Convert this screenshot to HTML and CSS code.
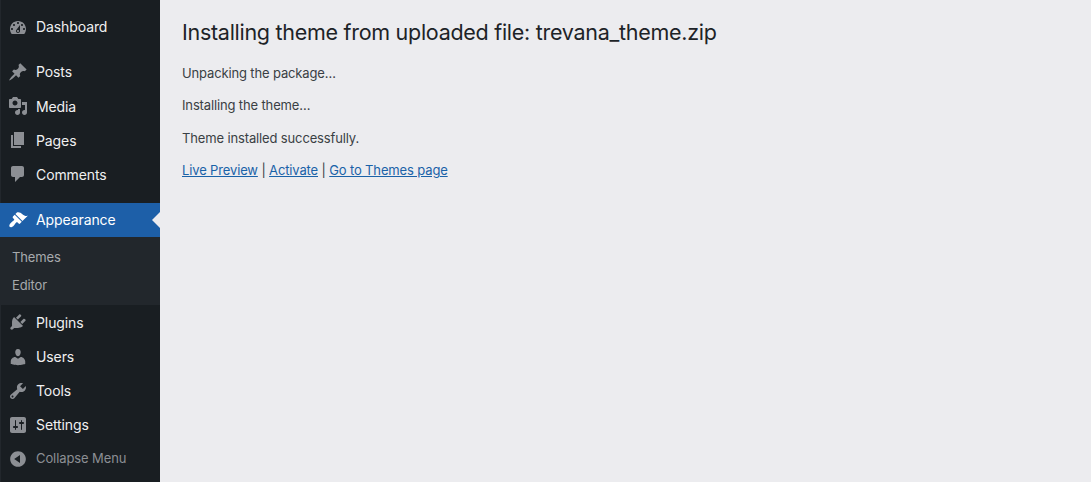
FILE: index.html
```html
<!DOCTYPE html>
<html lang="en">
  <head>
    <meta name="viewport" content="width=device-width, initial-scale=1.0" />
    <title>Install Themes</title>
    <link rel="stylesheet" href="styles.css">
  </head>
  <body>
    <nav class="adminmenu">
      <a class="menu-item" href="#">
        <svg class="menu-icon" viewBox="0 -1 20 20"><path d="M3.76 16h12.48c1.1-1.37 1.76-3.11 1.76-5 0-4.42-3.58-8-8-8s-8 3.58-8 8c0 1.89.66 3.63 1.76 5zM10 4c.55 0 1 .45 1 1s-.45 1-1 1-1-.45-1-1 .45-1 1-1zM6 6c.55 0 1 .45 1 1s-.45 1-1 1-1-.45-1-1 .45-1 1-1zm8 0c.55 0 1 .45 1 1s-.45 1-1 1-1-.45-1-1 .45-1 1-1zm-5.37 5.55L12 7v6c0 1.1-.9 2-2 2s-2-.9-2-2c0-.57.24-1.08.63-1.45zM4 10c.55 0 1 .45 1 1s-.45 1-1 1-1-.45-1-1 .45-1 1-1zm12 0c.55 0 1 .45 1 1s-.45 1-1 1-1-.45-1-1 .45-1 1-1zm-5 3c0-.55-.45-1-1-1s-1 .45-1 1 .45 1 1 1 1-.45 1-1z"/></svg>
        Dashboard
      </a>
      <div class="menu-separator"></div>
      <a class="menu-item" href="#">
        <svg class="menu-icon" viewBox="0 0 20 20"><path d="M10.44 3.02l1.82-1.82 6.36 6.35-1.83 1.82c-1.05-.68-2.48-.57-3.41.36l-.75.75c-.92.93-1.04 2.35-.35 3.41l-1.83 1.82-2.41-2.41-2.8 2.79c-.42.42-3.38 2.71-3.8 2.29s1.86-3.39 2.28-3.81l2.79-2.79L4.1 9.36l1.83-1.82c1.05.69 2.48.57 3.4-.36l.75-.75c.93-.92 1.05-2.35.36-3.41z"/></svg>
        Posts
      </a>
      <a class="menu-item" href="#">
        <svg class="menu-icon" viewBox="0 0 20 20"><path d="M13 11V4c0-.55-.45-1-1-1h-1.67L9 1H5L3.67 3H2c-.55 0-1 .45-1 1v7c0 .55.45 1 1 1h10c.55 0 1-.45 1-1zM7 4.5c1.38 0 2.5 1.12 2.5 2.5S8.38 9.5 7 9.5 4.5 8.38 4.5 7 5.62 4.5 7 4.5zM14 6h5v10.5c0 1.38-1.12 2.5-2.5 2.5S14 17.88 14 16.5s1.12-2.5 2.5-2.5c.17 0 .34.02.5.05V9h-3V6zm-4 8.05V13h2v3.5c0 1.38-1.12 2.5-2.5 2.5S7 17.88 7 16.5 8.12 14 9.5 14c.17 0 .34.02.5.05z"/></svg>
        Media
      </a>
      <a class="menu-item" href="#">
        <svg class="menu-icon" viewBox="0 0 20 20"><path d="M6 15V2h10v13H6zm-1 1h8v2H3V5h2v11z"/></svg>
        Pages
      </a>
      <a class="menu-item" href="#">
        <svg class="menu-icon" viewBox="0 0 20 20"><path d="M5 2h9c1.1 0 2 .9 2 2v7c0 1.1-.9 2-2 2h-2l-5 5v-5H5c-1.1 0-2-.9-2-2V4c0-1.1.9-2 2-2z"/></svg>
        Comments
      </a>
      <div class="menu-separator"></div>
      <a class="menu-item is-current" href="#">
        <svg class="menu-icon" viewBox="0 0 20 20"><path d="M14.48 11.06L7.41 3.99l1.5-1.5c.5-.56 2.3-.47 3.51.32 1.21.8 1.43 1.28 2.91 2.1 1.18.64 2.45 1.26 4.45.85zM13.77 11.77L6.7 4.7 4.93 6.47c-.39.39-.39 1.02 0 1.41l1.06 1.06c.39.39.39 1.03 0 1.42-.6.6-1.43 1.11-2.21 1.69-.35.26-.7.53-1.01.84-1.46 1.46-1.9 3.1-1.06 3.94s2.48.4 3.94-1.06c.31-.31.58-.66.84-1.01.58-.78 1.09-1.61 1.69-2.21.39-.39 1.03-.39 1.42 0l1.06 1.06c.39.39 1.02.39 1.41 0z"/></svg>
        Appearance
      </a>
      <div class="submenu">
        <a class="submenu-item" href="#">Themes</a>
        <a class="submenu-item" href="#">Editor</a>
      </div>
      <a class="menu-item" href="#">
        <svg class="menu-icon" viewBox="0 0 20 20"><path d="M13.11 4.36L9.87 7.6 8 5.73l3.24-3.24c.35-.34 1.05-.2 1.56.32.52.51.66 1.21.31 1.55zm-8 1.77l.91-1.12 9.01 9.01-1.19.84c-.71.71-2.63 1.16-3.82 1.16H6.14L4.9 17.26c-.59.59-1.54.59-2.12 0-.59-.58-.59-1.53 0-2.12l1.24-1.24v-3.88c0-1.13.4-3.19 1.09-3.89zm7.26 3.97l3.24-3.24c.34-.35 1.04-.21 1.55.31.52.51.66 1.21.31 1.55l-3.24 3.25z"/></svg>
        Plugins
      </a>
      <a class="menu-item" href="#">
        <svg class="menu-icon" viewBox="0 0 20 20"><path d="M10 9.25c-2.27 0-2.73-3.44-2.73-3.44C7 4.02 7.82 2 9.97 2c2.16 0 2.98 2.02 2.71 3.81 0 0-.41 3.44-2.68 3.44zm0 2.57L12.72 10c2.39 0 4.52 2.33 4.52 4.53v2.49s-3.65 1.13-7.24 1.13c-3.65 0-7.24-1.13-7.24-1.13v-2.49c0-2.25 1.94-4.48 4.47-4.48z"/></svg>
        Users
      </a>
      <a class="menu-item" href="#">
        <svg class="menu-icon" viewBox="0 0 20 20"><path d="M16.68 9.77c-1.34 1.34-3.3 1.67-4.95.99l-5.41 6.52c-.99.99-2.59.99-3.58 0s-.99-2.59 0-3.57l6.52-5.42c-.68-1.65-.35-3.61.99-4.95 1.28-1.28 3.12-1.62 4.72-1.06l-2.89 2.89 2.82 2.82 2.86-2.87c.53 1.58.18 3.39-1.08 4.65zM3.81 16.21c.4.39 1.04.39 1.43 0 .4-.4.4-1.04 0-1.43-.39-.4-1.03-.4-1.43 0-.39.39-.39 1.03 0 1.43z"/></svg>
        Tools
      </a>
      <a class="menu-item" href="#">
        <svg class="menu-icon" viewBox="0 0 20 20"><path d="M18 16V4c0-1.1-.9-2-2-2H4c-1.1 0-2 .9-2 2v12c0 1.1.9 2 2 2h12c1.1 0 2-.9 2-2zM8 11h1c.55 0 1 .45 1 1s-.45 1-1 1H8v1.5c0 .28-.22.5-.5.5s-.5-.22-.5-.5V13H6c-.55 0-1-.45-1-1s.45-1 1-1h1V5.5c0-.28.22-.5.5-.5s.5.22.5.5V11zm5-2h-1c-.55 0-1-.45-1-1s.45-1 1-1h1V5.5c0-.28.22-.5.5-.5s.5.22.5.5V7h1c.55 0 1 .45 1 1s-.45 1-1 1h-1v5.5c0 .28-.22.5-.5.5s-.5-.22-.5-.5V9z"/></svg>
        Settings
      </a>
      <a class="menu-item menu-collapse" href="#">
        <svg class="menu-icon" viewBox="0 0 20 20"><path d="M10 2.16c4.33 0 7.84 3.51 7.84 7.84s-3.51 7.84-7.84 7.84S2.16 14.33 2.16 10 5.71 2.16 10 2.16zm2 11.72V6.12L6.18 9.97z"/></svg>
        Collapse Menu
      </a>
    </nav>

    <main class="content">
      <h1>Installing theme from uploaded file: trevana_theme.zip</h1>
      <p>Unpacking the package…</p>
      <p>Installing the theme…</p>
      <p>Theme installed successfully.</p>
      <p><a href="#">Live Preview</a> | <a href="#">Activate</a> | <a href="#">Go to Themes page</a></p>
    </main>
  </body>
</html>
```

FILE: styles.css
```css
html,
body {
  height: 100%;
}
body {
  display: flex;
  margin: 0;
  overflow: hidden;
  background: #ececef;
  color: #3a3f44;
  font-family: Inter, "Liberation Sans", sans-serif;
  font-size: 13px;
  letter-spacing: -0.14px;
  line-height: 1.5;
}

.adminmenu {
  flex: 0 0 160px;
  padding-top: 9.6px;
  background: #191e22;
  box-shadow: inset 1px 0 0 #22272c;
  box-sizing: border-box;
}
.menu-item {
  position: relative;
  display: flex;
  align-items: center;
  gap: 8px;
  height: 34.2px;
  padding-left: 8px;
  color: #f0f0f1;
  font-size: 14px;
  letter-spacing: -0.1px;
  text-decoration: none;
}
.menu-icon {
  flex: none;
  width: 20px;
  height: 20px;
  fill: #8c8f94;
}
.menu-separator {
  height: 11px;
}

.is-current {
  background: #1d5fa8;
  color: #fff;
}
.is-current .menu-icon {
  fill: #fff;
}
.is-current::after {
  content: "";
  position: absolute;
  top: 50%;
  right: 0;
  margin-top: -8px;
  border: 8px solid transparent;
  border-right-color: #ececef;
  border-left-width: 0;
}

.submenu {
  display: flex;
  flex-flow: column;
  padding: 6px 0 6.6px;
  background: #22272c;
}
.submenu-item {
  height: 28px;
  padding-left: 12px;
  color: #a7aaad;
  line-height: 28px;
  text-decoration: none;
}

.menu-collapse {
  height: 34px;
  color: #8c8f94;
  font-size: 13px;
}

.content {
  flex: 1;
  padding: 0 22px;
}
h1 {
  margin: 0;
  padding: 18px 0 4.5px;
  color: #1d2327;
  font-size: 21.5px;
  font-weight: 400;
  letter-spacing: -0.28px;
  line-height: 28px;
}
p {
  margin: 13px 0;
}
a {
  color: #1a62a8;
}
```
